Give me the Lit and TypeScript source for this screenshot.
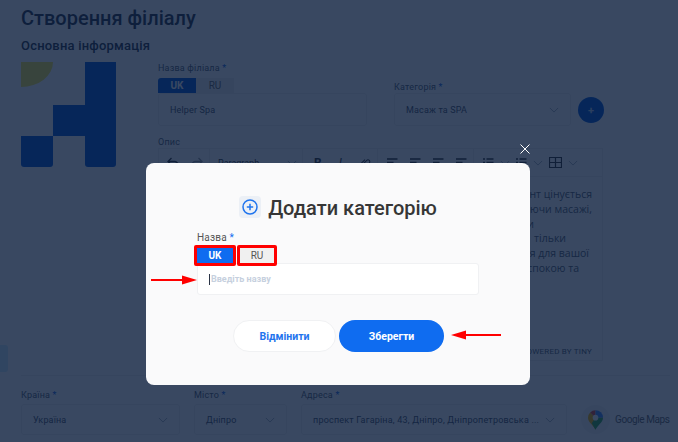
import { LitElement, html, css, svg } from "lit";
import { customElement } from "lit/decorators.js";

const chevron = html`<svg class="chev" viewBox="0 0 12 7" width="10" height="6"><path d="M1 1l5 5 5-5" fill="none" stroke="currentColor" stroke-width="1"/></svg>`;

const lines: { text: string; end: number }[] = [
  { text: "ент цінується", end: 0 },
  { text: "аючи масажі,", end: 0 },
  { text: "и", end: 58 },
  { text: "тільки", end: 26 },
  { text: "ня для вашої", end: 3 },
  { text: "спокою та", end: 13 },
];

const alignIcon = svg`<path d="M0 2h10.500M0 5.500h6.500M0 9h10.500" stroke="currentColor" stroke-width="1.300" fill="none"/>`;
const listIcon = svg`<path d="M0 2h2M0 5.500h2M0 9h2M3.500 2h7M3.500 5.500h7M3.500 9h7" stroke="currentColor" stroke-width="1.300" fill="none"/>`;

@customElement("app-root")
export class AppRoot extends LitElement {
  static styles = css`
    :host { display: block; width: 678px; height: 442px; position: relative; overflow: hidden; font-family: Roboto, "Noto Sans", sans-serif; background: #fff; }
    .page { width: 678px; height: 442px; box-sizing: border-box; padding: 6px 8px 0 21px; display: flex; flex-direction: column; color: #2b3446; position: relative; }
    h1 { margin: 0; font-size: 20px; line-height: 24px; font-weight: 500; }
    h2 { margin: 7px 0 0; font-size: 13px; line-height: 17px; font-weight: 500; letter-spacing: .2px; }
    .main { display: flex; gap: 42px; margin-top: 8px; }
    .logo { width: 95px; height: 105px; display: grid; grid-template-columns: 32px 32px 31px; grid-template-rows: 43px 31px 31px; flex: none; }
    .cell { background: #0058d8; }
    .c3 { grid-column: 3; grid-row: 1; }
    .sun { grid-column: 1; grid-row: 1; background: #f8e84a; height: 25px; border-bottom-right-radius: 32px 25px; }
    .m1 { grid-column: 2; grid-row: 2; }
    .m2 { grid-column: 3; grid-row: 2; }
    .b1 { grid-column: 1; grid-row: 3; border-radius: 0 0 3px 3px; }
    .b2 { grid-column: 3; grid-row: 3; border-radius: 0 0 3px 3px; }
    .form { width: 446px; flex: none; display: flex; flex-direction: column; }
    .top { display: flex; align-items: flex-end; }
    label { display: block; font-size: 9px; line-height: 12px; letter-spacing: .2px; color: #555e6e; }
    .req { color: #0b62e0; }
    .name { width: 209px; flex: none; }
    .tabs { display: flex; margin-top: 4px; }
    .tab { width: 38px; height: 15px; font-size: 10px; line-height: 15px; text-align: center; color: #666; background: #f1f1f1; }
    .tab.on { background: #0058d8; color: #fff; font-weight: 700; border-radius: 3px 0 0 0; }
    .field { box-sizing: border-box; height: 33px; border: 1px solid #eee; border-radius: 3px; display: flex; align-items: center; padding: 0 11px; font-size: 9px; letter-spacing: .15px; color: #4b5364; background: #fff; }
    .cat { width: 177px; flex: none; margin-left: 27px; }
    .chev { color: #9aa3b0; flex: none; }
    .grow { flex: 1; }
    .plus { width: 26px; height: 26px; border-radius: 50%; background: #0058d8; color: #b9d0f5; margin: 0 0 3px 7px; display: flex; align-items: center; justify-content: center; font-size: 11px; font-weight: 700; flex: none; }
    .desc { margin-top: 10px; }
    .editor { height: 213px; box-sizing: border-box; border: 1px solid #eee; display: flex; flex-direction: column; width: 445px; position: relative; }
    .bar { height: 27px; flex: none; border-bottom: 1px solid #eee; display: flex; align-items: center; color: #333; font-size: 9px; }
    .bar svg { flex: none; }
    .grp { height: 27px; box-sizing: border-box; border-right: 1px solid #eee; display: flex; align-items: center; flex: none; }
    .g-undo { width: 51px; padding-left: 8px; gap: 12px; }
    .g-para { width: 93px; padding: 0 5px 0 8px; justify-content: space-between; }
    .g-fmt { width: 75px; padding-left: 11px; gap: 17px; font-size: 12px; }
    .g-align { width: 96px; padding-left: 9px; gap: 12px; }
    .g-list { padding-left: 9px; gap: 6px; border-right: 0; }
    .text { padding: 10px 10px 0 11px; font-family: "Open Sans", sans-serif; font-size: 10.500px; line-height: 14.800px; color: #555e6e; }
    .line { text-align: right; white-space: nowrap; height: 14.800px; }
    .tiny { position: absolute; right: 10px; bottom: 3px; font-size: 8px; line-height: 10px; letter-spacing: .2px; color: #555e6e; }
    .rule { height: 1px; background: #eee; margin-top: 14px; }
    .bottom { display: flex; gap: 14px; margin-top: 13px; align-items: flex-end; }
    .bottom .field { margin-top: 3px; justify-content: space-between; height: 31px; }
    .b-country { width: 159px; flex: none; }
    .b-city { width: 93px; flex: none; }
    .b-addr { width: 266px; flex: none; }
    .addr { white-space: nowrap; letter-spacing: .2px; }
    .map { display: flex; align-items: center; gap: 5px; height: 31px; font-size: 10px; letter-spacing: -.4px; color: #666; white-space: nowrap; flex: none; }
    .pin-wrap { width: 29px; height: 29px; border-radius: 50%; background: #f3f4f6; display: flex; align-items: center; justify-content: center; }
    .side { position: absolute; left: 0; top: 345px; width: 8px; height: 27px; background: #cfeeff; border-radius: 0 3px 3px 0; }

    .overlay { position: absolute; inset: 0; background: rgba(8, 26, 57, .8); backdrop-filter: blur(.6px); display: flex; justify-content: center; align-items: flex-start; padding: 163px 2px 0 0; box-sizing: border-box; }
    .modal { position: relative; width: 384px; height: 222px; box-sizing: border-box; background: #fafafb; border-radius: 8px; padding: 33px 51px 0; display: flex; flex-direction: column; color: #333; }
    .close { position: absolute; right: -1px; top: -20px; width: 12px; height: 12px; }
    .head { display: flex; justify-content: center; align-items: center; gap: 7px; height: 22px; }
    .ico { width: 22px; height: 22px; border-radius: 4px; background: #ecf0f6; display: flex; align-items: center; justify-content: center; }
    .ttl { font-size: 20px; line-height: 24px; padding-top: 2px; font-weight: 500; color: #363636; white-space: nowrap; }
    .m-label { font-size: 10px; line-height: 12px; letter-spacing: .2px; color: #555; margin-top: 14px; }
    .m-label span { color: #0f6cf0; }
    .m-tabs { display: flex; margin-top: 1px; margin-left: -3px; position: relative; z-index: 1; gap: 1px; height: 21px; }
    .m-tab { box-sizing: border-box; height: 21px; border: 3px solid #f00; border-radius: 2px; font-size: 10px; line-height: 15px; text-align: center; }
    .m-tab.uk { width: 42px; background: #0f6cf0; color: #fff; font-weight: 700; }
    .m-tab.ru { width: 40px; background: #f0f0f0; color: #555; }
    .m-input { box-sizing: border-box; height: 32px; margin-top: -3px; width: 282px; background: #fff; border: 1px solid #f0f1f3; border-radius: 3px; display: flex; align-items: center; padding-left: 11px; font-size: 9px; font-weight: 700; letter-spacing: 0; color: #c6d0de; }
    .caret { width: 1px; height: 11px; background: #2b3446; margin-right: 1px; flex: none; }
    .actions { display: flex; justify-content: flex-end; gap: 3px; margin-top: 25px; box-sizing: border-box; padding-right: 35px; width: 282px; }
    .btn { box-sizing: border-box; height: 32px; border-radius: 16px; font-size: 10.500px; font-weight: 700; display: flex; align-items: center; justify-content: center; }
    .cancel { width: 103px; background: #fff; border: 1px solid #f0f1f3; color: #1f74ee; }
    .save { width: 105px; background: #0f6cf0; color: #fff; }
    .arrow { position: absolute; }
    .a1 { left: 5px; top: 112px; }
    .a2 { left: 305px; top: 167px; }
  `;

  render() {
    return html`
      <div class="page">
        <h1>Створення філіалу</h1>
        <h2>Основна інформація</h2>
        <div class="main">
          <div class="logo">
            <div class="sun"></div>
            <div class="cell c3"></div>
            <div class="cell m1"></div>
            <div class="cell m2"></div>
            <div class="cell b1"></div>
            <div class="cell b2"></div>
          </div>
          <div class="form">
            <div class="top">
              <div class="name">
                <label>Назва філіала <span class="req">*</span></label>
                <div class="tabs"><div class="tab on">UK</div><div class="tab">RU</div></div>
                <div class="field">Helper Spa</div>
              </div>
              <div class="cat">
                <label>Категорія <span class="req">*</span></label>
                <div class="field">Масаж та SPA <span class="grow"></span>${chevron}</div>
              </div>
              <div class="plus">+</div>
            </div>
            <div class="desc">
              <label>Опис</label>
              <div class="editor">
                <div class="bar">
                  <div class="grp g-undo">
                    <svg width="12" height="12" viewBox="0 0 12 12"><path d="M4.500 1L1 4.500 4.500 8M1 4.500h6.500a3.500 3.500 0 0 1 3.500 3.500v3" fill="none" stroke="currentColor" stroke-width="1.300"/></svg>
                    <svg width="12" height="12" viewBox="0 0 12 12" opacity=".5"><path d="M7.500 1L11 4.500 7.500 8M11 4.500H4.500A3.500 3.500 0 0 0 1 8v3" fill="none" stroke="currentColor" stroke-width="1.300"/></svg>
                  </div>
                  <div class="grp g-para"><span>Paragraph</span>${chevron}</div>
                  <div class="grp g-fmt">
                    <b>B</b><i>I</i>
                    <svg width="12" height="12" viewBox="0 0 14 14"><path d="M5 8l4-4a2 2 0 0 1 3 3l-5 5a3 3 0 0 1-5-4l5-5" fill="none" stroke="currentColor" stroke-width="1.200"/></svg>
                  </div>
                  <div class="grp g-align">
                    <svg width="11" height="11" viewBox="0 0 11 11">${alignIcon}</svg>
                    <svg width="11" height="11" viewBox="0 0 11 11">${alignIcon}</svg>
                    <svg width="11" height="11" viewBox="0 0 11 11">${alignIcon}</svg>
                    <svg width="11" height="11" viewBox="0 0 11 11">${alignIcon}</svg>
                  </div>
                  <div class="grp g-list">
                    <svg width="11" height="11" viewBox="0 0 11 11">${listIcon}</svg>${chevron}
                    <svg width="11" height="11" viewBox="0 0 11 11">${listIcon}</svg>${chevron}
                    <svg width="13" height="11" viewBox="0 0 13 11"><path d="M.5.5h12v10H.5zM.5 5.500h12M6.500.5v10" fill="none" stroke="currentColor" stroke-width="1.200"/></svg>${chevron}
                  </div>
                </div>
                <div class="text">
                  ${lines.map((l) => html`<div class="line" style="padding-right:${l.end}px">${l.text}</div>`)}
                </div>
                <div class="tiny">POWERED BY TINY</div>
              </div>
            </div>
          </div>
        </div>
        <div class="rule"></div>
        <div class="bottom">
          <div class="b-country"><label>Країна <span class="req">*</span></label><div class="field">Україна ${chevron}</div></div>
          <div class="b-city"><label>Місто <span class="req">*</span></label><div class="field">Дніпро ${chevron}</div></div>
          <div class="b-addr"><label>Адреса <span class="req">*</span></label><div class="field"><span class="addr">проспект Гагаріна, 43, Дніпро, Дніпропетровська ...</span> ${chevron}</div></div>
          <div class="map">
            <div class="pin-wrap">
              <svg width="15" height="20" viewBox="0 0 16 21">
                <path d="M8 21C6 16 0 13 0 8a8 8 0 0 1 2.300-5.600L8 8z" fill="#f4b400"/>
                <path d="M2.300 2.400A8 8 0 0 1 8 0v8z" fill="#db4437"/>
                <path d="M8 0a8 8 0 0 1 8 8L8 8z" fill="#4285f4"/>
                <path d="M16 8c0 5-6 8-8 13L4 14l4-6z" fill="#34a853"/>
                <circle cx="8" cy="8" r="3" fill="#fff"/>
              </svg>
            </div>
            Google Maps
          </div>
        </div>
      </div>
      <div class="side"></div>
      <div class="overlay">
        <div class="modal">
          <svg class="close" viewBox="0 0 12 12"><path d="M1.500 1.500l9 9M10.500 1.500l-9 9" stroke="#fff" stroke-width="1"/></svg>
          <div class="head">
            <div class="ico">
              <svg width="16" height="16" viewBox="0 0 16 16"><circle cx="8" cy="8" r="7" fill="none" stroke="#1f74ee" stroke-width="1.500"/><path d="M4.800 8h6.400M8 4.800v6.400" stroke="#1f74ee" stroke-width="1.500"/></svg>
            </div>
            <div class="ttl">Додати категорію</div>
          </div>
          <div class="m-label">Назва <span>*</span></div>
          <div class="m-tabs">
            <div class="m-tab uk">UK</div>
            <div class="m-tab ru">RU</div>
          </div>
          <div class="m-input"><div class="caret"></div>Введіть назву</div>
          <div class="actions">
            <div class="btn cancel">Відмінити</div>
            <div class="btn save">Зберегти</div>
          </div>
          <svg class="arrow a1" width="46" height="10" viewBox="0 0 46 10"><path d="M0 5h32" stroke="#f00" stroke-width="2"/><path d="M31 .5L46 5l-15 4.500z" fill="#f00"/></svg>
          <svg class="arrow a2" width="50" height="10" viewBox="0 0 50 10"><path d="M14 5h36" stroke="#f00" stroke-width="2"/><path d="M15 .5L0 5l15 4.500z" fill="#f00"/></svg>
        </div>
      </div>
    `;
  }
}
